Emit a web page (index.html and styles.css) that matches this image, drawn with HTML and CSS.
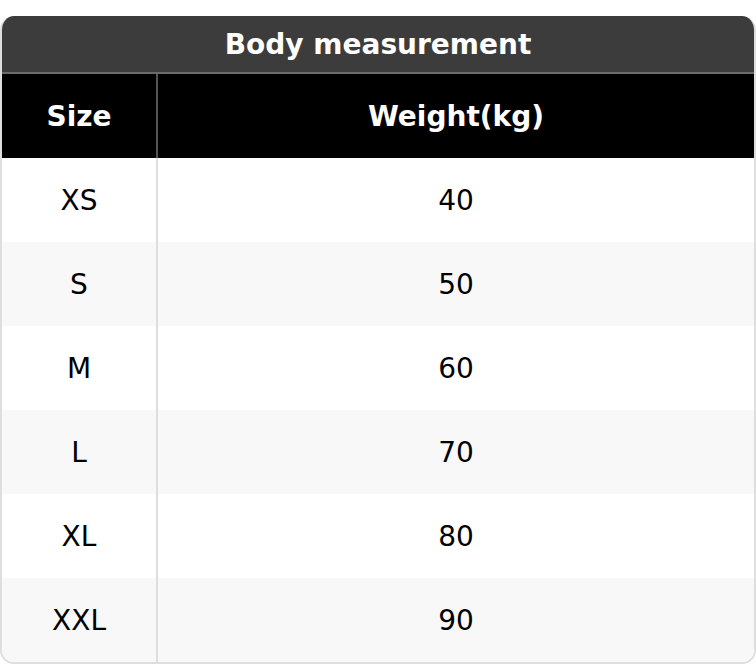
FILE: index.html
```html
<!DOCTYPE html>
<html>
<head>
<meta charset="utf-8">
<link rel="stylesheet" href="styles.css">
</head>
<body>
<div class="card">
  <div class="title">Body measurement</div>
  <table class="sizes">
    <thead>
      <tr><th class="c1">Size</th><th>Weight(kg)</th></tr>
    </thead>
    <tbody>
      <tr><td class="c1">XS</td><td>40</td></tr>
      <tr><td class="c1">S</td><td>50</td></tr>
      <tr><td class="c1">M</td><td>60</td></tr>
      <tr><td class="c1">L</td><td>70</td></tr>
      <tr><td class="c1">XL</td><td>80</td></tr>
      <tr><td class="c1">XXL</td><td>90</td></tr>
    </tbody>
  </table>
</div>
</body>
</html>
```
FILE: styles.css
```css
html, body {
  margin: 0;
  padding: 0;
  background: #ffffff;
}
body {
  padding-top: 16px;
  font-family: "DejaVu Sans", sans-serif;
}
.card {
  width: 756px;
  box-sizing: border-box;
  border: 2px solid #dedede;
  border-top: none;
  border-radius: 14px;
  overflow: hidden;
}
.title {
  height: 58px;
  margin: 0 -2px;
  background: #3c3c3c;
  color: #ffffff;
  font-weight: bold;
  font-size: 28px;
  display: flex;
  align-items: center;
  justify-content: center;
  border-bottom: 2px solid #6a6a6a;
  box-sizing: border-box;
}
.sizes {
  width: 100%;
  border-collapse: collapse;
  table-layout: fixed;
}
.sizes th, .sizes td {
  padding: 0;
  text-align: center;
  height: 84px;
}
.sizes th {
  background: #000000;
  color: #ffffff;
  font-weight: bold;
  font-size: 28px;
}
.sizes td {
  color: #000000;
  font-size: 28px;
}
.sizes .c1 {
  width: 154px;
  border-right: 2px solid #dedede;
}
.sizes th.c1 {
  border-right-color: #555555;
}
.sizes tbody tr:nth-child(even) td {
  background: #f8f8f8;
}
```
